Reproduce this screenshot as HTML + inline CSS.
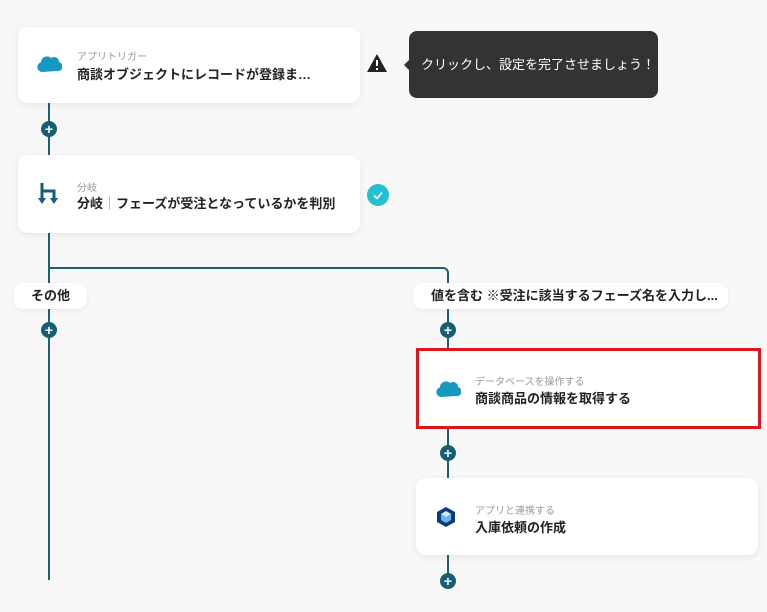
<!DOCTYPE html>
<html><head><meta charset="utf-8"><style>
body{margin:0;width:767px;height:612px;background:#f8f8f8;position:relative;overflow:hidden;font-family:"Liberation Sans","Noto Sans CJK JP",sans-serif}
.card{position:absolute;background:#fff;border-radius:10px;box-shadow:0 2px 8px rgba(0,0,0,.08)}
.sub{position:absolute;font-size:10px;color:#999}
.ttl{position:absolute;font-size:13px;font-weight:bold;color:#222;white-space:nowrap}
.v{position:absolute;width:2px;background:#1f5f74}
.plus{position:absolute;width:16px;height:16px;border-radius:50%;background:#155e75;color:#fff;font-size:14px;font-weight:bold;line-height:16px;text-align:center}
.pill{position:absolute;background:#fff;border-radius:10px;font-size:13px;font-weight:bold;color:#222;line-height:26px;box-shadow:0 2px 6px rgba(0,0,0,.06)}
</style></head><body>
<div class="v" style="left:48px;top:103px;height:477px"></div>
<div class="v" style="left:447px;top:278px;height:305px"></div>
<div style="position:absolute;left:48px;top:267px;width:394px;height:2px;background:#1f5f74"></div>
<div style="position:absolute;left:439px;top:267px;width:10px;height:12px;border-top:2px solid #1f5f74;border-right:2px solid #1f5f74;border-top-right-radius:6px;box-sizing:border-box"></div>

<div class="card" style="left:18px;top:27px;width:342px;height:76px">
<svg style="position:absolute;left:18px;top:27px" width="26" height="20" viewBox="0 0 26 20"><path d="M6 18a5 5 0 0 1-1-9.8A6 6 0 0 1 15 4a5 5 0 0 1 8 4a4.5 4.5 0 0 1-2 9z" fill="#1798c1"/></svg>
<div class="sub" style="left:59px;top:21px">アプリトリガー</div>
<div class="ttl" style="left:59px;top:37px">商談オブジェクトにレコードが登録ま…</div>
</div>
<svg style="position:absolute;left:366px;top:53px" width="22" height="20" viewBox="0 0 22 20"><path d="M11 1L21 19H1z" fill="#222"/><rect x="10" y="7" width="2" height="6" fill="#fff"/><rect x="10" y="15" width="2" height="2" fill="#fff"/></svg>
<div style="position:absolute;left:409px;top:31px;width:249px;height:67px;background:#333;border-radius:8px;color:#fff;font-size:13px;line-height:67px;text-indent:12px">クリックし、設定を完了させましょう！</div>
<div style="position:absolute;left:404px;top:60px;width:0;height:0;border:5px solid transparent;border-right-color:#333;border-left:0"></div>

<div class="plus" style="left:41px;top:121px">+</div>

<div class="card" style="left:18px;top:155px;width:342px;height:78px">
<svg style="position:absolute;left:20px;top:28px" width="22" height="24" viewBox="0 0 22 24"><path d="M4 0v16M4 8h12v8" stroke="#155e75" stroke-width="3" fill="none"/><path d="M0 15h8l-4 6zM12 15h8l-4 6z" fill="#155e75"/></svg>
<div class="sub" style="left:59px;top:24px">分岐</div>
<div class="ttl" style="left:59px;top:38px">分岐<span style="color:#88a;font-weight:normal">｜</span>フェーズが受注となっているかを判別</div>
</div>
<svg style="position:absolute;left:367px;top:184px" width="22" height="22" viewBox="0 0 22 22"><circle cx="11" cy="11" r="11" fill="#22c0d0"/><path d="M7 11.5l3 3 5-6" stroke="#fff" stroke-width="1.6" fill="none"/></svg>

<div class="pill" style="left:14px;top:283px;width:73px;text-align:center">その他</div>
<div class="pill" style="left:413px;top:283px;width:315px;text-indent:18px">値を含む ※受注に該当するフェーズ名を入力し...</div>

<div class="plus" style="left:41px;top:322px">+</div>
<div class="plus" style="left:440px;top:322px">+</div>

<div style="position:absolute;left:416px;top:348px;width:345px;height:81px;background:#fff;border:3px solid #e0161b;box-sizing:border-box">
<svg style="position:absolute;left:16px;top:28px" width="26" height="20" viewBox="0 0 26 20"><path d="M6 18a5 5 0 0 1-1-9.8A6 6 0 0 1 15 4a5 5 0 0 1 8 4a4.5 4.5 0 0 1-2 9z" fill="#1798c1"/></svg>
<div class="sub" style="left:56px;top:22px">データベースを操作する</div>
<div class="ttl" style="left:56px;top:37px">商談商品の情報を取得する</div>
</div>

<div class="plus" style="left:440px;top:445px">+</div>

<div class="card" style="left:416px;top:478px;width:342px;height:77px">
<svg style="position:absolute;left:20px;top:28px" width="20" height="22" viewBox="0 0 20 22"><path d="M10 1L19 6v10l-9 5-9-5V6z" fill="#0d3b7a"/><path d="M10 5l5 3v6l-5 3-5-3V8z" fill="#6fb3e6"/><path d="M10 5l5 3-5 3-5-3z" fill="#cfe8fb"/></svg>
<div class="sub" style="left:59px;top:24px">アプリと連携する</div>
<div class="ttl" style="left:59px;top:39px">入庫依頼の作成</div>
</div>

<div class="plus" style="left:440px;top:573px">+</div>
</body></html>
